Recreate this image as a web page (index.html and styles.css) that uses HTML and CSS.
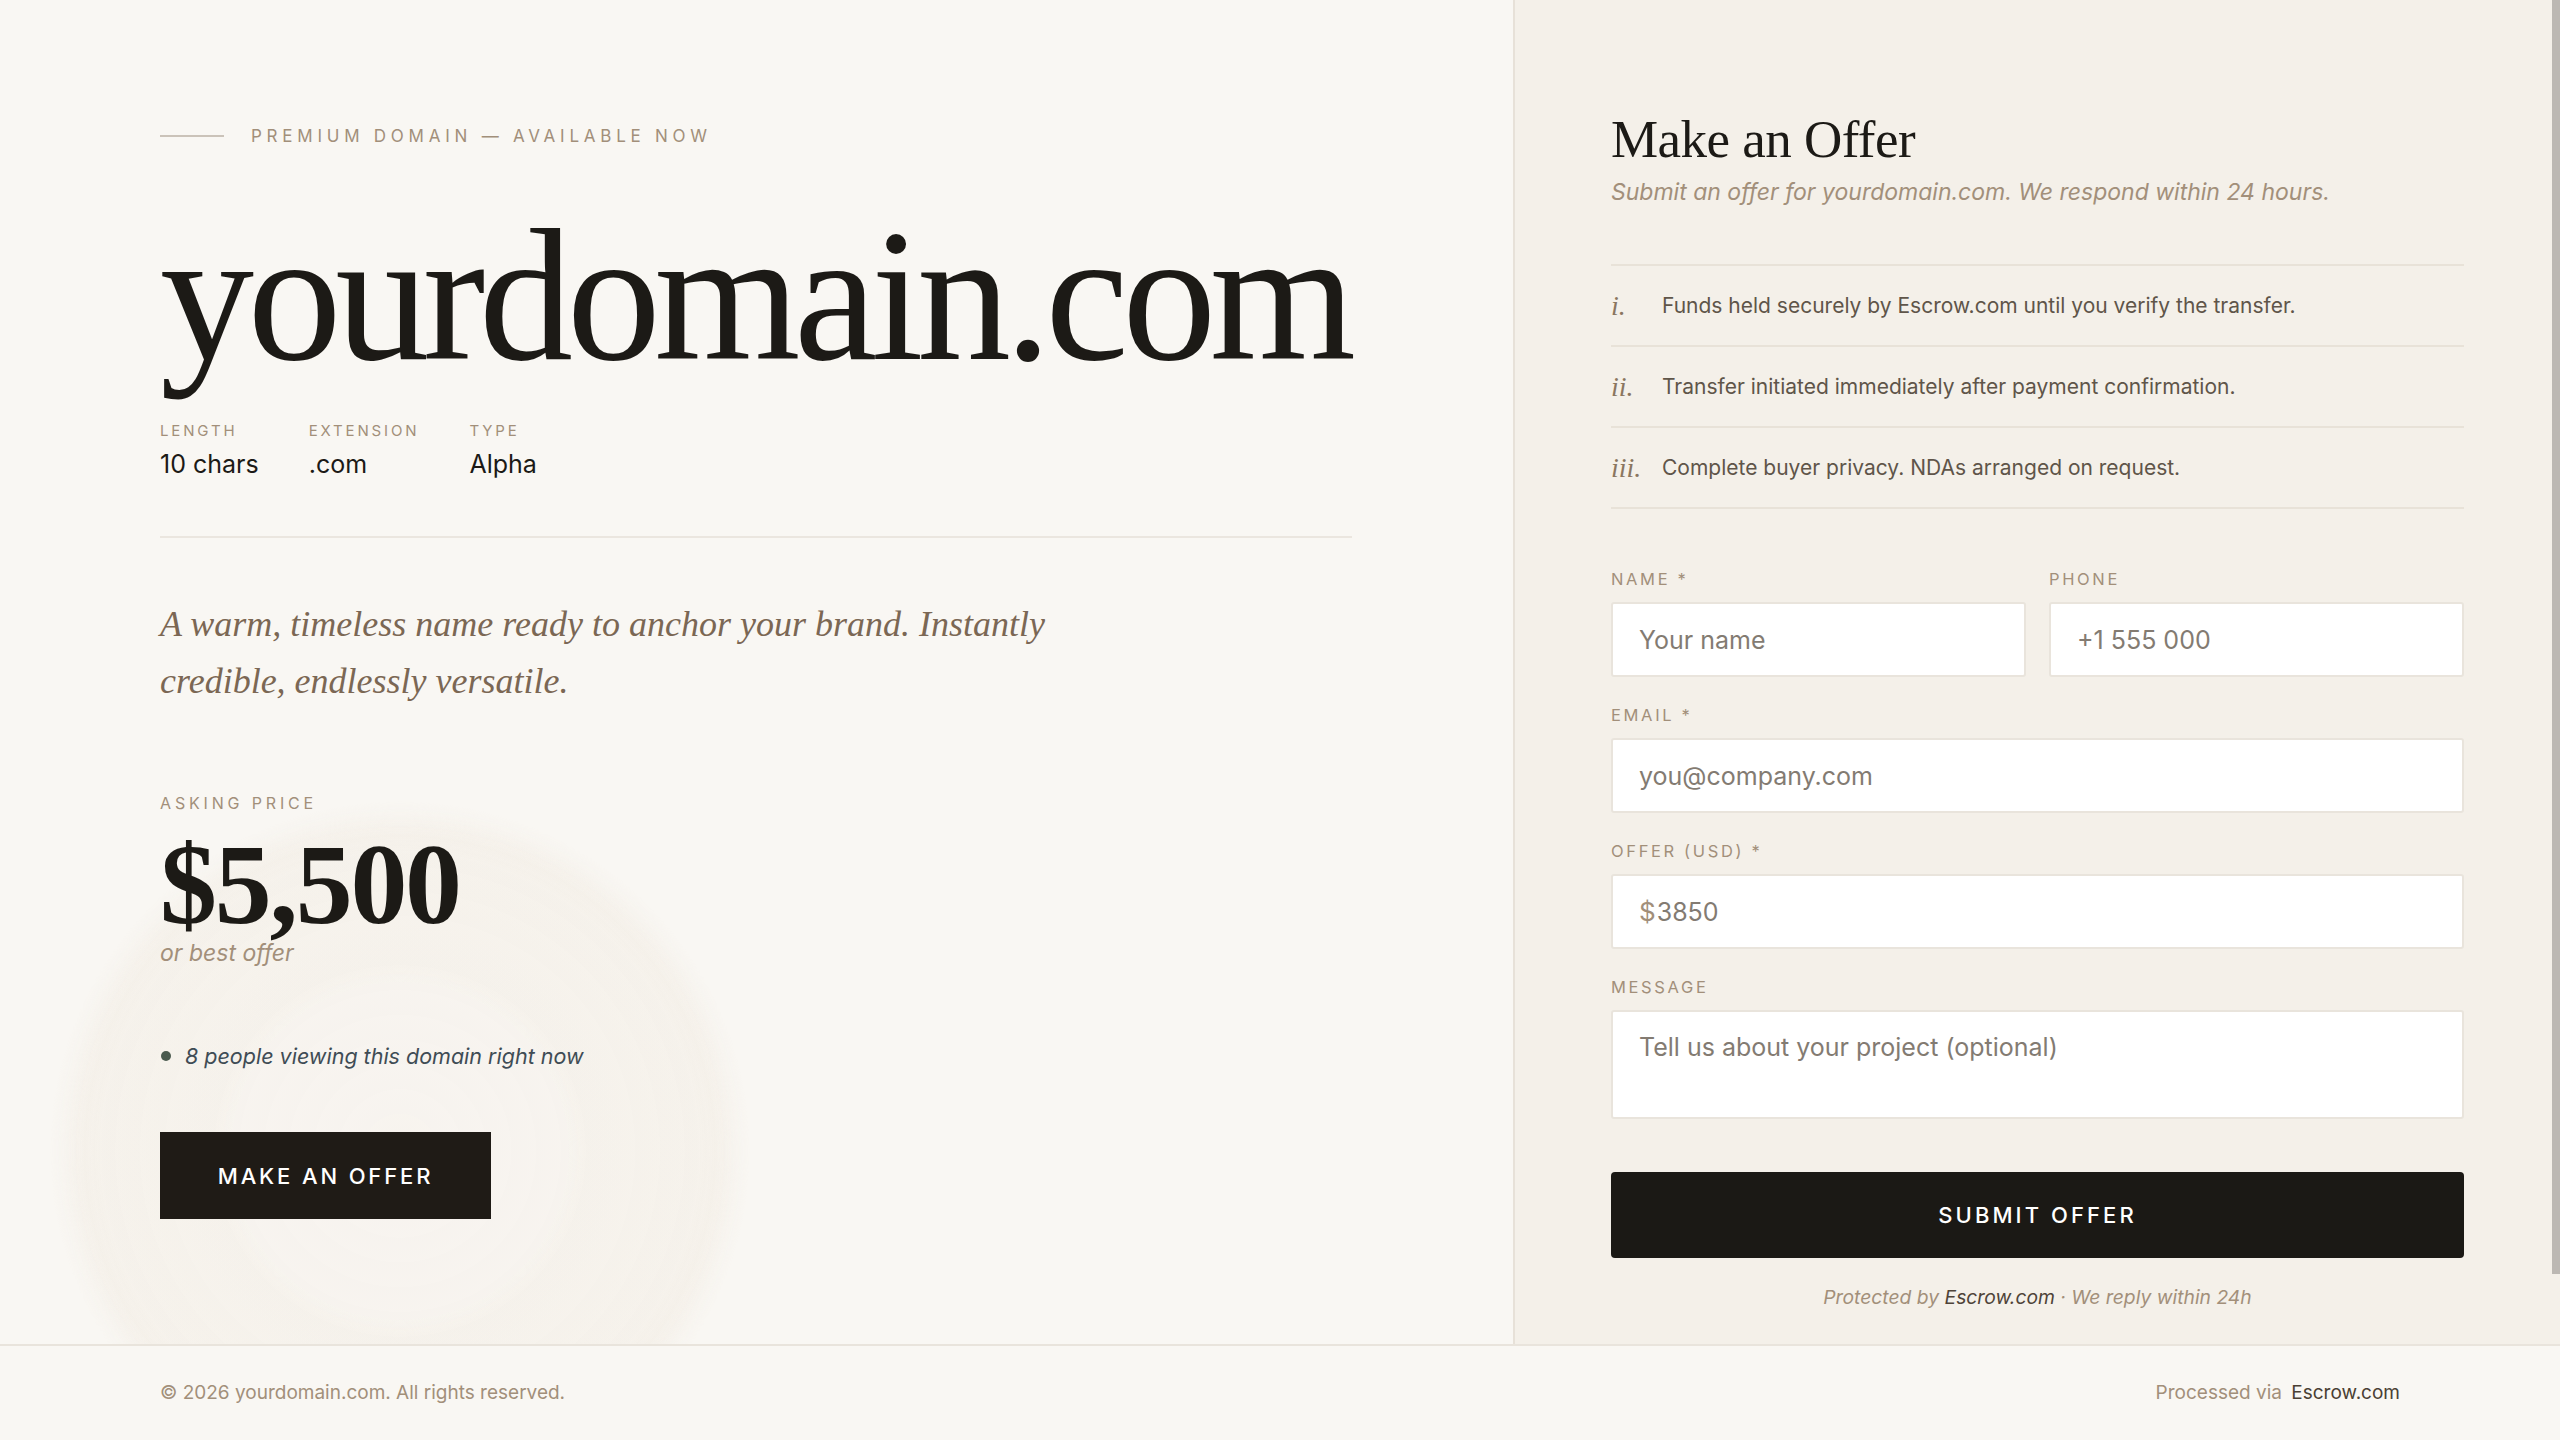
FILE: index.html
```html
<!DOCTYPE html>
<html lang="en">
<head>
<meta charset="utf-8">
<title>yourdomain.com — Premium domain for sale</title>
<link rel="stylesheet" href="styles.css">
</head>
<body>
<div class="page">
  <main class="main">
    <section class="left">
      <div class="halo"></div>
      <div class="eyebrow"><span class="eyebrow-rule"></span><span>Premium Domain — Available Now</span></div>
      <h1 class="domain">yourdomain.com</h1>
      <div class="meta">
        <div class="meta-item"><span class="meta-label">Length</span><span class="meta-value">10 chars</span></div>
        <div class="meta-item"><span class="meta-label">Extension</span><span class="meta-value">.com</span></div>
        <div class="meta-item"><span class="meta-label">Type</span><span class="meta-value">Alpha</span></div>
      </div>
      <div class="divider"></div>
      <p class="tagline">A warm, timeless name ready to anchor your brand. Instantly credible, endlessly versatile.</p>
      <div class="price-block">
        <span class="price-label">Asking Price</span>
        <span class="price">$5,500</span>
        <span class="price-note">or best offer</span>
      </div>
      <p class="live"><span class="live-dot"></span><span>8 people viewing this domain right now</span></p>
      <button class="cta" type="button">Make an Offer</button>
    </section>
    <aside class="right">
      <h2 class="offer-title">Make an Offer</h2>
      <p class="offer-sub">Submit an offer for yourdomain.com. We respond within 24 hours.</p>
      <ol class="points">
        <li class="point"><span class="point-num">i.</span><span class="point-text">Funds held securely by Escrow.com until you verify the transfer.</span></li>
        <li class="point"><span class="point-num">ii.</span><span class="point-text">Transfer initiated immediately after payment confirmation.</span></li>
        <li class="point"><span class="point-num">iii.</span><span class="point-text">Complete buyer privacy. NDAs arranged on request.</span></li>
      </ol>
      <form class="form">
        <div class="row-2">
          <label class="field"><span class="field-label">Name *</span><input class="input" type="text" placeholder="Your name"></label>
          <label class="field"><span class="field-label">Phone</span><input class="input" type="text" placeholder="+1 555 000"></label>
        </div>
        <label class="field"><span class="field-label">Email *</span><input class="input" type="email" placeholder="you@company.com"></label>
        <label class="field"><span class="field-label">Offer (USD) *</span>
          <span class="input money"><span class="money-sign">$</span><input class="money-input" type="text" placeholder="3850"></span>
        </label>
        <label class="field"><span class="field-label">Message</span><textarea class="input textarea" placeholder="Tell us about your project (optional)"></textarea></label>
        <button class="submit" type="button">Submit Offer</button>
        <p class="protected">Protected by <span class="strong">Escrow.com</span> · We reply within 24h</p>
      </form>
    </aside>
  </main>
  <footer class="footer">
    <span>© 2026 yourdomain.com. All rights reserved.</span>
    <span>Processed via <span class="footer-strong">Escrow.com</span></span>
  </footer>
</div>
</body>
</html>
```

FILE: styles.css
```css
* { box-sizing: border-box; }
html, body { margin: 0; padding: 0; height: 100%; }
body {
  font-family: Inter, "Noto Sans", "DejaVu Sans", sans-serif;
  color: #1c1a16;
  background: #f9f7f3;
}
.page {
  height: 100vh;
  display: flex;
  flex-direction: column;
}
.main {
  flex: 1;
  min-height: 0;
  display: grid;
  grid-template-columns: 1513px 1fr;
  grid-template-rows: minmax(0, 1fr);
}
.left {
  position: relative;
  overflow: hidden;
  min-height: 0;
  background: #f9f7f3;
  padding: 124px 160px 0 160px;
  display: flex;
  flex-direction: column;
  align-items: flex-start;
}
.left > * { position: relative; }
.left > .halo {
  position: absolute;
  left: 50px;
  top: 801px;
  width: 700px;
  height: 700px;
  border-radius: 50%;
  background:
    radial-gradient(circle, rgba(242,236,227,0) 0, rgba(242,236,227,0) 34%, rgba(242,236,227,0.25) 37%, rgba(242,236,227,0.25) 100%),
    radial-gradient(circle, rgba(243,238,230,0.3) 0, rgba(243,238,230,0.35) 60%, rgba(241,235,226,0.4) 66%, rgba(243,238,230,0) 71%);
  -webkit-mask-image: radial-gradient(circle, #000 0, #000 64%, transparent 71%);
  mask-image: radial-gradient(circle, #000 0, #000 64%, transparent 71%);
}
.eyebrow {
  display: flex;
  align-items: center;
  gap: 27px;
  height: 24px;
  font-size: 17px;
  letter-spacing: 0.28em;
  text-transform: uppercase;
  color: #a28f7a;
}
.eyebrow-rule {
  width: 64px;
  height: 2px;
  background: #cbc3b9;
}
.domain {
  margin: 54px 0 0 0;
  font-family: "Liberation Serif", "Times New Roman", serif;
  font-weight: 400;
  font-size: 188px;
  line-height: 1;
  letter-spacing: -0.034em;
  color: #1c1a16;
}
.meta {
  display: flex;
  gap: 50px;
  margin-top: 31px;
}
.meta-item {
  display: flex;
  flex-direction: column;
  gap: 7px;
}
.meta-label {
  font-size: 15px;
  line-height: 20px;
  letter-spacing: 0.19em;
  text-transform: uppercase;
  color: #a28f7a;
}
.meta-value {
  font-size: 25px;
  line-height: 32px;
  color: #1c1a16;
}
.divider {
  width: 1192px;
  height: 2px;
  margin-top: 56px;
  background: #ebe6df;
}
.tagline {
  margin: 58px 0 0 0;
  max-width: 940px;
  font-family: "Liberation Serif", "Times New Roman", serif;
  font-style: italic;
  font-size: 36px;
  line-height: 57px;
  color: #7b6754;
}
.price-block {
  display: flex;
  flex-direction: column;
  align-items: flex-start;
  margin-top: 83px;
}
.price-label {
  font-size: 16px;
  line-height: 20px;
  letter-spacing: 0.24em;
  text-transform: uppercase;
  color: #a28f7a;
}
.price {
  margin-top: 22px;
  font-family: "Liberation Serif", "Times New Roman", serif;
  font-weight: 700;
  font-size: 114px;
  line-height: 100px;
  letter-spacing: -0.02em;
  color: #1c1a16;
}
.price-note {
  margin-top: 4px;
  font-size: 23px;
  line-height: 28px;
  font-style: italic;
  color: #a28f7a;
}
.live {
  margin: 75px 0 0 0;
  display: flex;
  align-items: center;
  gap: 14px;
  font-size: 21.5px;
  line-height: 28px;
  font-style: italic;
  color: #3f4c55;
}
.live-dot {
  width: 10px;
  height: 10px;
  border-radius: 50%;
  background: #4b5b4f;
  margin-left: 1px;
}
.cta {
  margin-top: 62px;
  width: 331px;
  height: 87px;
  border: 0;
  border-radius: 0;
  background: #1f1b16;
  color: #ffffff;
  font-family: Inter, "Noto Sans", sans-serif;
  font-size: 22px;
  font-weight: 500;
  letter-spacing: 0.13em;
  text-transform: uppercase;
  cursor: pointer;
}

/* right panel */
.right {
  position: relative;
  min-height: 0;
  overflow: hidden;
  background: #f4f0e9;
  border-left: 2px solid #e7e1d8;
  padding: 113px 96px 104px 96px;
}
.right::after {
  content: "";
  position: absolute;
  top: 0;
  right: 0;
  width: 8px;
  height: 1274px;
  background: #bcb8b3;
}
.offer-title {
  margin: 0;
  font-family: "Liberation Serif", "Times New Roman", serif;
  font-weight: 400;
  font-size: 53px;
  line-height: 1;
  letter-spacing: -0.01em;
  color: #1c1a16;
}
.offer-sub {
  margin: 11px 0 0 0;
  font-size: 23px;
  line-height: 30px;
  font-style: italic;
  color: #a28f7a;
}
.points {
  list-style: none;
  margin: 57px 0 0 0;
  padding: 0;
  border-top: 2px solid #e8e2d8;
}
.point {
  display: flex;
  align-items: center;
  gap: 18px;
  padding: 26px 0;
  border-bottom: 2px solid #e8e2d8;
}
.point-num {
  min-width: 33px;
  font-family: "Liberation Serif", "Times New Roman", serif;
  font-style: italic;
  font-size: 28px;
  line-height: 27px;
  color: #8a7660;
}
.point-text {
  font-size: 21px;
  line-height: 27px;
  color: #5f5549;
}
.form {
  margin-top: 60px;
  display: flex;
  flex-direction: column;
  gap: 28px;
}
.row-2 {
  display: grid;
  grid-template-columns: 1fr 1fr;
  gap: 23px;
}
.field {
  display: flex;
  flex-direction: column;
  gap: 13px;
}
.field-label {
  font-size: 16.5px;
  line-height: 20px;
  letter-spacing: 0.16em;
  text-transform: uppercase;
  color: #a28f7a;
}
.input {
  display: block;
  flex: none;
  width: 100%;
  height: 75px;
  padding: 0 26px;
  background: #ffffff;
  border: 2px solid #e9e4dc;
  border-radius: 3px;
  font-family: Inter, "Noto Sans", sans-serif;
  font-size: 25px;
  color: #1c1a16;
  outline: none;
}
.input::placeholder, .money-input::placeholder { color: #837b72; }
.money {
  display: flex;
  align-items: center;
  gap: 1px;
}
.money-sign {
  font-size: 26px;
  color: #a28f7a;
}
.money-input {
  flex: 1;
  min-width: 0;
  height: 100%;
  border: 0;
  padding: 0;
  background: transparent;
  font-family: Inter, "Noto Sans", sans-serif;
  font-size: 25px;
  color: #1c1a16;
  outline: none;
}
.textarea {
  height: 109px;
  padding: 20px 26px;
  resize: none;
  line-height: 30px;
}
.submit {
  flex: none;
  margin-top: 25px;
  height: 86px;
  border: 0;
  border-radius: 4px;
  background: #1b1915;
  color: #ffffff;
  font-family: Inter, "Noto Sans", sans-serif;
  font-size: 22px;
  font-weight: 500;
  letter-spacing: 0.14em;
  text-transform: uppercase;
  cursor: pointer;
}
.protected {
  margin: -3px 0 0 0;
  text-align: center;
  font-size: 19.3px;
  line-height: 28px;
  font-style: italic;
  color: #a28f7a;
}
.protected .strong { color: #4e4338; }

.footer {
  flex: 0 0 96px;
  display: flex;
  justify-content: space-between;
  align-items: center;
  padding: 0 160px;
  border-top: 2px solid #e9e4dc;
  background: #f9f7f3;
  font-size: 19px;
  line-height: 24px;
  color: #a28f7a;
}
.footer-strong { color: #4a3f34; margin-left: 4px; }
```
